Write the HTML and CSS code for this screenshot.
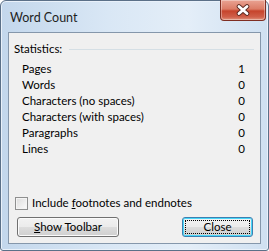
FILE: index.html
```html
<!DOCTYPE html>
<html lang="en">
<head>
    <meta charset="UTF-8">
    <title>Word Count</title>
    <link rel="stylesheet" href="styles.css">
</head>
<body>
    <div id="window">
        <div id="titlebar">
            <span id="title">Word Count</span>
            <div id="close-x">
                <svg width="16" height="12" viewBox="0 0 16 12">
                    <path d="M4 2.5 L12 9.5 M12 2.5 L4 9.5" stroke="#5a2a22" stroke-width="4.6" stroke-linecap="round"/>
                    <path d="M4 2.5 L12 9.5 M12 2.5 L4 9.5" stroke="#ffffff" stroke-width="2.8" stroke-linecap="round"/>
                </svg>
            </div>
        </div>
        <div id="client">
            <div id="group-head">
                <span>Statistics:</span>
                <div class="rule"></div>
            </div>
            <div id="stats">
                <div class="row"><span>Pages</span><span>1</span></div>
                <div class="row"><span>Words</span><span>0</span></div>
                <div class="row"><span>Characters (no spaces)</span><span>0</span></div>
                <div class="row"><span>Characters (with spaces)</span><span>0</span></div>
                <div class="row"><span>Paragraphs</span><span>0</span></div>
                <div class="row"><span>Lines</span><span>0</span></div>
            </div>
            <label id="footnotes">
                <span class="box"></span>
                <span>Include <u>f</u>ootnotes and endnotes</span>
            </label>
            <div id="buttons">
                <button id="toolbar"><u>S</u>how Toolbar</button>
                <button id="close"><span>Close</span></button>
            </div>
        </div>
    </div>
</body>
</html>
```
FILE: styles.css
```css
* {
    margin: 0;
    padding: 0;
    box-sizing: border-box;
}

html, body {
    width: 269px;
    height: 251px;
    overflow: hidden;
    background: #ffffff;
}

#window {
    width: 269px;
    height: 251px;
    display: flex;
    flex-direction: column;
    padding: 0 7px 6px 7px;
    border: 1px solid #5b7088;
    border-radius: 6px 6px 3px 3px;
    background: linear-gradient(to right, #c3d7ec 0%, #d9e7f5 40%, #e4eef8 70%, #cfe0f1 100%);
    box-shadow: inset 0 0 0 1px #e9f1fa;
}

#titlebar {
    height: 31px;
    display: flex;
    justify-content: space-between;
    align-items: flex-start;
}

#title {
    font-family: Lato, "Open Sans", sans-serif;
    font-size: 12.5px;
    line-height: 16px;
    color: #1e1e1e;
    padding: 9px 0 0 2px;
}

#close-x {
    width: 46px;
    height: 21px;
    margin: -1px -5px 0 0;
    display: flex;
    align-items: center;
    justify-content: center;
    border: 1px solid #7e2e22;
    border-top: none;
    border-radius: 0 0 4px 4px;
    background: linear-gradient(to bottom, #e9a393 0%, #dc7c66 45%, #c6442c 55%, #d0604a 85%, #e0957f 100%);
    box-shadow: inset 0 0 0 1px rgba(255,255,255,0.35);
}

#client {
    flex: 1;
    display: flex;
    flex-direction: column;
    border: 1px solid #8597ab;
    background: #f0f0f0;
    padding: 8px 4px 6px 5px;
    font-family: Lato, "Open Sans", sans-serif;
    font-size: 11.5px;
    line-height: 16px;
    color: #000000;
}

#group-head {
    height: 16px;
    display: flex;
    align-items: center;
    gap: 7px;
}

#group-head .rule {
    flex: 1;
    height: 1px;
    margin-right: 2px;
    background: #d5dfe5;
}

#stats {
    margin: 4px 0 0 8px;
    padding-right: 11px;
    flex: 1;
}

.row {
    height: 16px;
    display: flex;
    justify-content: space-between;
    align-items: center;
}

#footnotes {
    height: 16px;
    display: flex;
    align-items: center;
    gap: 4px;
    margin-left: 1px;
}

#footnotes .box {
    width: 13px;
    height: 13px;
    border: 1px solid #8e8f8f;
    background: linear-gradient(135deg, #dcdcdc, #fbfbfb);
    box-shadow: inset 0 0 0 1px #f4f4f4;
}

#buttons {
    margin-top: 6px;
    display: flex;
    justify-content: space-between;
    padding: 0 3px 0 3px;
}

button {
    height: 20px;
    font-family: Lato, "Open Sans", sans-serif;
    font-size: 11.5px;
    line-height: 16px;
    color: #000000;
    border: 1px solid #707070;
    border-radius: 3px;
    background: linear-gradient(to bottom, #f2f2f2 0%, #ebebeb 50%, #dddddd 51%, #cfcfcf 100%);
    box-shadow: inset 0 0 0 1px #fbfbfb;
}

#toolbar {
    width: 102px;
}

#close {
    width: 71px;
    border-color: #3c7fb1;
    padding: 2px;
    box-shadow: inset 0 0 0 1px #48d7f9;
}

#close span {
    display: block;
    height: 100%;
    line-height: 12px;
    border: 1px dotted #000000;
}
```
